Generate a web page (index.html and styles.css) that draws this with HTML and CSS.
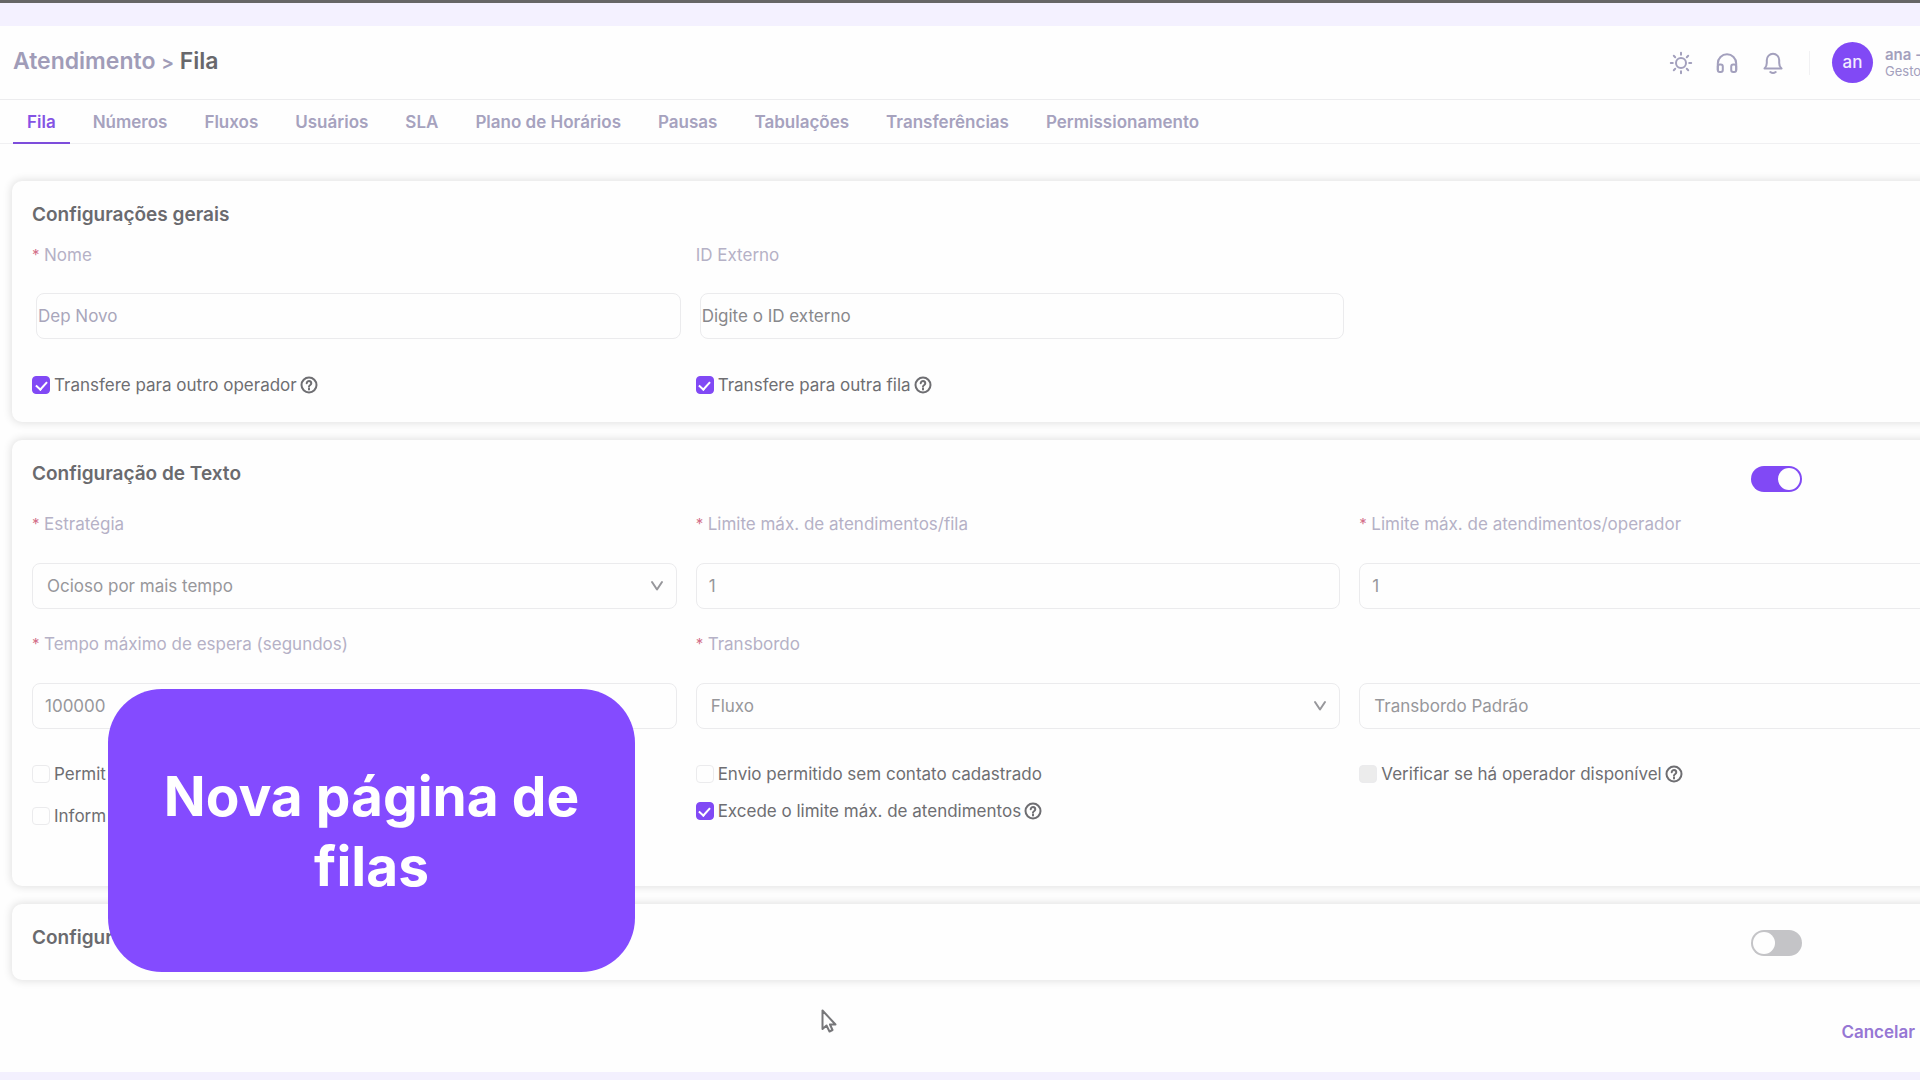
FILE: index.html
```html
<!DOCTYPE html>
<html lang="pt-BR">
<head>
<meta charset="utf-8">
<meta name="viewport" content="width=device-width, initial-scale=1">
<title>Atendimento - Fila</title>
<link rel="stylesheet" href="styles.css">
</head>
<body>
<svg class="defs" aria-hidden="true">
  <symbol id="help" viewBox="0 0 18 18"><circle cx="9" cy="9" r="7.5"/><path d="M6.7 7.2a2.3 2.2 0 1 1 3.6 1.8c-.8.5-1.3.8-1.3 1.6M9 12.4v1.2"/></symbol>
  <symbol id="chevron" viewBox="0 0 14 14"><path d="M2 3l5 7.500 5-7.500"/></symbol>
</svg>

<header class="topbar">
  <h1 class="breadcrumb"><a href="#">Atendimento</a> <span class="sep">&gt;</span> <span class="current">Fila</span></h1>
  <div class="actions">
    <button type="button" class="icon-button" aria-label="Tema">
      <svg viewBox="0 0 24 24"><circle cx="12" cy="12" r="5"/><path d="M12 1.800v2M12 20.200v2M1.800 12h2M20.200 12h2M4.800 4.800l1.400 1.400M17.800 17.800l1.400 1.400M4.800 19.200l1.400-1.400M17.800 6.200l1.400-1.400"/></svg>
    </button>
    <button type="button" class="icon-button" aria-label="Suporte">
      <svg viewBox="0 0 24 24"><path d="M2.800 19v-6.500a9.200 9.200 0 0 1 18.400 0V19"/><rect x="2.800" y="13.500" width="5" height="7.500" rx="2"/><rect x="16.200" y="13.500" width="5" height="7.500" rx="2"/></svg>
    </button>
    <button type="button" class="icon-button" aria-label="Notificações">
      <svg viewBox="0 0 24 24"><path d="M3.500 17.500c1.400-1.300 2.300-3 2.300-5.500V9a6.200 6.200 0 0 1 12.400 0v3c0 2.500.9 4.200 2.300 5.500zM9.300 21c1.500 1.200 3.900 1.200 5.400 0"/></svg>
    </button>
    <span class="divider"></span>
    <span class="avatar">an</span>
    <span class="user"><b>ana -</b><small>Gesto</small></span>
  </div>
</header>

<nav class="tabs">
  <a href="#" class="tab active">Fila</a>
  <a href="#" class="tab">Números</a>
  <a href="#" class="tab">Fluxos</a>
  <a href="#" class="tab">Usuários</a>
  <a href="#" class="tab">SLA</a>
  <a href="#" class="tab">Plano de Horários</a>
  <a href="#" class="tab">Pausas</a>
  <a href="#" class="tab">Tabulações</a>
  <a href="#" class="tab">Transferências</a>
  <a href="#" class="tab">Permissionamento</a>
</nav>

<main class="content">
  <section class="card general">
    <div class="card-head"><h2>Configurações gerais</h2></div>
    <div class="fields">
      <div class="field">
        <label for="nome"><i>*</i>Nome</label>
        <input class="control flush muted" id="nome" type="text" value="Dep Novo">
      </div>
      <div class="field">
        <label for="externo">ID Externo</label>
        <input class="control flush" id="externo" type="text" placeholder="Digite o ID externo">
      </div>
    </div>
    <div class="checks">
      <div class="check-col">
        <label class="check"><input type="checkbox" checked>Transfere para outro operador<svg class="help"><use href="#help"/></svg></label>
      </div>
      <div class="check-col">
        <label class="check"><input type="checkbox" checked>Transfere para outra fila<svg class="help"><use href="#help"/></svg></label>
      </div>
    </div>
  </section>

  <section class="card text-card">
    <div class="card-head">
      <h2>Configuração de Texto</h2>
      <input class="switch" type="checkbox" role="switch" aria-label="Ativar configuração de texto" checked>
    </div>
    <div class="fields">
      <div class="field">
        <label for="estrategia"><i>*</i>Estratégia</label>
        <div class="select">
          <select class="control" id="estrategia"><option>Ocioso por mais tempo</option></select>
          <svg class="chevron"><use href="#chevron"/></svg>
        </div>
      </div>
      <div class="field">
        <label for="limite-fila"><i>*</i>Limite máx. de atendimentos/fila</label>
        <input class="control" id="limite-fila" type="text" value="1">
      </div>
      <div class="field">
        <label for="limite-operador"><i>*</i>Limite máx. de atendimentos/operador</label>
        <input class="control" id="limite-operador" type="text" value="1">
      </div>
      <div class="field">
        <label for="espera"><i>*</i>Tempo máximo de espera (segundos)</label>
        <input class="control" id="espera" type="text" value="100000">
      </div>
      <div class="field">
        <label for="transbordo"><i>*</i>Transbordo</label>
        <div class="select">
          <select class="control" id="transbordo"><option>Fluxo</option></select>
          <svg class="chevron"><use href="#chevron"/></svg>
        </div>
      </div>
      <div class="field">
        <div class="select">
          <select class="control" aria-label="Fluxo de transbordo"><option>Transbordo Padrão</option></select>
          <svg class="chevron"><use href="#chevron"/></svg>
        </div>
      </div>
    </div>
    <div class="checks">
      <div class="check-col loose">
        <label class="check"><input type="checkbox">Permit</label>
        <label class="check"><input type="checkbox">Inform</label>
      </div>
      <div class="check-col">
        <label class="check"><input type="checkbox">Envio permitido sem contato cadastrado</label>
        <label class="check"><input type="checkbox" checked>Excede o limite máx. de atendimentos<svg class="help"><use href="#help"/></svg></label>
      </div>
      <div class="check-col">
        <label class="check"><input type="checkbox" disabled>Verificar se há operador disponível<svg class="help"><use href="#help"/></svg></label>
      </div>
    </div>
  </section>

  <section class="card last-card">
    <div class="card-head">
      <h2>Configur</h2>
      <input class="switch" type="checkbox" role="switch" aria-label="Ativar configuração">
    </div>
  </section>
</main>

<footer class="footer"><button type="button" class="cancel">Cancelar</button></footer>

<aside class="callout">Nova página de filas</aside>
<svg class="pointer" viewBox="0 0 16 24" aria-hidden="true"><path d="M1.500 1.500v18.500l4-3.500 3 6 3-1.500-2.500-5.500h5.500z"/></svg>
</body>
</html>
```
FILE: styles.css
```css
* {
  box-sizing: border-box;
}

body {
  position: relative;
  display: flex;
  flex-direction: column;
  min-height: 100vh;
  margin: 0;
  overflow: hidden;
  border-top: 3px solid #666;
  border-bottom: 8px solid #f3f0fe;
  background: #fefefe;
  color: #5f5f62;
  font: 17px/20px Inter, "Open Sans", sans-serif;
}

a {
  color: inherit;
  text-decoration: none;
}

svg {
  fill: none;
  stroke: currentColor;
  stroke-linecap: round;
  stroke-linejoin: round;
}

.defs {
  position: absolute;
  width: 0;
  height: 0;
}

/* Header */
.topbar {
  display: flex;
  align-items: center;
  justify-content: space-between;
  height: 97px;
  padding-left: 13px;
  border-top: 23px solid #f4f1ff;
  border-bottom: 1px solid #ececee;
}

.breadcrumb {
  margin: 0;
  padding-bottom: 2px;
  color: #a09cb8;
  font-size: 23px;
  font-weight: 600;
  line-height: 28px;
}

.sep {
  font-size: 19px;
}

.current {
  color: #68686c;
}

.actions {
  display: flex;
  align-items: center;
  color: #a3a0bd;
}

.icon-button {
  width: 24px;
  height: 24px;
  margin-right: 22px;
  padding: 0;
  border: 0;
  background: none;
  color: inherit;
}

.icon-button svg {
  display: block;
  width: 24px;
  height: 24px;
  stroke-width: 2;
}

.divider {
  width: 1px;
  height: 24px;
  margin-left: 2px;
  border-left: 1px solid #f1f1f3;
}

.avatar {
  width: 41px;
  height: 41px;
  margin: 0 12px 0 22px;
  border-radius: 50%;
  background: #8149f5;
  color: #f2ecff;
  font-weight: 500;
  line-height: 41px;
  text-align: center;
}

.user {
  display: flex;
  flex-direction: column;
  width: 35px;
  white-space: nowrap;
  line-height: 17px;
}

.user b {
  font-size: 15px;
  font-weight: 600;
}

.user small {
  font-size: 13px;
}

/* Tabs */
.tabs {
  display: flex;
  gap: 9px;
  height: 44px;
  padding-left: 13px;
  border-bottom: 1px solid #f0f0f2;
}

.tab {
  height: 44px;
  padding: 0 14px;
  color: #a6a2be;
  font-weight: 600;
  line-height: 44px;
}

.tab.active {
  border-bottom: 2px solid #7d4ddb;
  color: #8453e4;
}

/* Cards run past the right edge of the window */
.content {
  display: flex;
  flex-direction: column;
  gap: 18px;
  width: 105%;
  padding: 37px 0 0 12px;
}

.card {
  padding: 22px 12px 27px 20px;
  border-radius: 10px;
  background: #fefefe;
  box-shadow: 0 0 8px 1px rgba(0, 0, 0, 0.12);
}

.text-card {
  padding-bottom: 60px;
}

.last-card {
  padding-bottom: 24px;
}

.card-head {
  display: flex;
  align-items: flex-start;
  justify-content: space-between;
  padding-right: 202px;
}

h2 {
  margin: 0;
  padding-top: 2px;
  color: #6a6a6e;
  font-size: 19px;
  font-weight: 600;
  line-height: 20px;
}

.fields,
.checks {
  display: grid;
  grid-template-columns: repeat(3, 1fr);
  column-gap: 19px;
}

.fields {
  row-gap: 25px;
  margin-top: 22px;
}

.general .fields {
  margin-top: 20px;
}

.field {
  display: flex;
  flex-direction: column;
  justify-content: flex-end;
  gap: 29px;
}

.general .field {
  gap: 28px;
}

.field label {
  display: flex;
  height: 20px;
  color: #b5b1c6;
}

.field i {
  width: 12px;
  color: #d3708a;
  font-size: 15px;
  font-style: normal;
}

.control {
  width: 100%;
  height: 46px;
  padding: 0 14px 0 12px;
  border: 1px solid #ebebed;
  border-radius: 8px;
  outline: 0;
  background: transparent;
  color: #97979b;
  font: inherit;
  appearance: none;
}

select.control {
  padding-left: 14px;
}

.control.flush {
  margin-left: 4px;
  padding-left: 1px;
}

.control.muted {
  color: #a9a6bb;
}

.control::placeholder {
  color: #88888c;
  opacity: 1;
}

.select {
  display: grid;
  align-items: center;
}

.select > * {
  grid-area: 1 / 1;
}

.chevron {
  justify-self: end;
  width: 14px;
  height: 14px;
  margin-right: 13px;
  color: #97979b;
  stroke-width: 2;
  pointer-events: none;
}

/* Check boxes */
.checks {
  margin-top: 35px;
}

.general .checks {
  margin-top: 36px;
}

.check-col {
  display: flex;
  flex-direction: column;
  align-items: flex-start;
  gap: 17px;
}

.check-col.loose {
  gap: 22px;
}

.check {
  display: flex;
  align-items: center;
  color: #6e6e72;
}

.check input {
  width: 18px;
  height: 18px;
  margin: 0 4px 0 0;
  border: 1px solid #ebebed;
  border-radius: 4px;
  appearance: none;
}

.check input:checked {
  border-color: #8149f5;
  background: #8149f5;
}

.check input:checked::before {
  content: "";
  display: block;
  width: 5px;
  height: 9px;
  margin: 2px auto 0;
  border: solid #fff;
  border-width: 0 2px 2px 0;
  transform: rotate(42deg);
}

.check input:disabled {
  background: #ececec;
}

.help {
  width: 18px;
  height: 18px;
  margin-left: 3px;
  stroke-width: 2;
}

.switch {
  display: flex;
  width: 51px;
  height: 26px;
  margin: 4px 0 0;
  padding: 2px;
  border-radius: 13px;
  background: #c4c4c7;
  appearance: none;
}

.switch::before {
  content: "";
  width: 22px;
  height: 22px;
  border-radius: 50%;
  background: #fefefe;
}

.switch:checked {
  justify-content: flex-end;
  background: #8149f5;
}

.footer {
  display: flex;
  flex: 1;
  align-items: center;
  justify-content: flex-end;
  padding: 12px 5px 0 0;
}

.cancel {
  padding: 0;
  border: 0;
  background: none;
  color: #9677d4;
  font: inherit;
  font-weight: 600;
}

/* Layers over the page */
.callout {
  position: absolute;
  top: 686px;
  left: 108px;
  display: flex;
  align-items: center;
  width: 527px;
  height: 283px;
  padding: 0 50px;
  border-radius: 54px;
  background: #844bff;
  color: #fff;
  font-size: 55px;
  font-weight: 700;
  line-height: 70px;
  text-align: center;
}

.pointer {
  position: absolute;
  top: 1006px;
  left: 821px;
  width: 16px;
  height: 24px;
  color: #77777a;
  fill: #fefefe;
  stroke-width: 2;
}
```
